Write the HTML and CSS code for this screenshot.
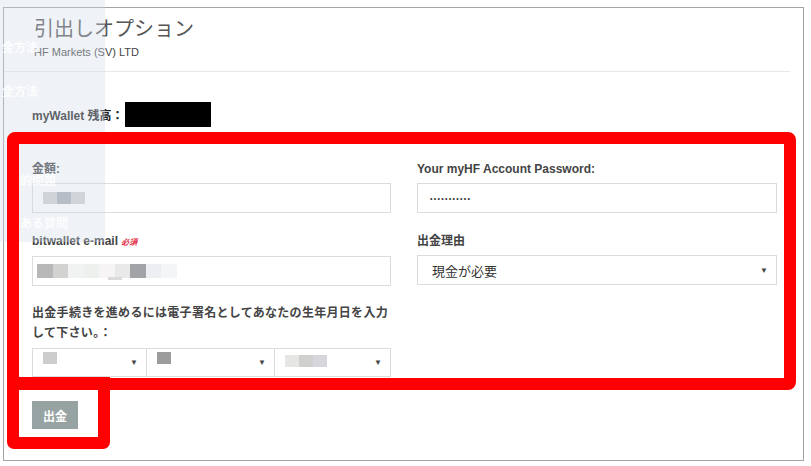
FILE: index.html
```html
<!DOCTYPE html>
<html lang="ja">
<head>
    <meta charset="UTF-8">
    <title>引出しオプション</title>
    <link rel="stylesheet" href="styles.css">
</head>
<body>
    <div class="page">
        <div class="modal">
            <div class="modal-header">
                <h2>引出しオプション</h2>
                <p>HF Markets (SV) LTD</p>
            </div>
            <div class="modal-body">
                <div class="balance">
                    <span>myWallet 残高：</span>
                    <span class="masked"></span>
                </div>

                <form class="withdraw-form">
                    <div class="form-group">
                        <label>金額:</label>
                        <div class="field">
                            <span class="blur" style="background:#d0d0d0"></span><span class="blur" style="background:#aaacb4"></span><span class="blur" style="background:#d0d1d1"></span>
                        </div>
                    </div>

                    <div class="form-group">
                        <label>Your myHF Account Password:</label>
                        <div class="field"><span class="dots">•••••••••••</span></div>
                    </div>

                    <div class="form-group">
                        <label>bitwallet e-mail <span class="required">必須</span></label>
                        <div class="field field-email">
                            <span class="blur" style="background:#b8b8b8"></span><span class="blur" style="background:#d2d2d0"></span><span class="blur" style="background:#f1f2f2"></span><span class="blur" style="background:#eef0ee"></span><span class="blur" style="background:#f6f4f4"></span><span class="blur" style="background:#e9e9e9"></span><span class="blur" style="background:#a2a3a6"></span><span class="blur" style="background:#eceef1"></span><span class="blur" style="background:#f4f5f6"></span>
                            <span class="blur-strip"></span>
                        </div>
                    </div>

                    <div class="form-group">
                        <label>出金理由</label>
                        <div class="field select">
                            <span>現金が必要</span>
                            <span class="arrow">▼</span>
                        </div>
                    </div>

                    <div class="form-group birth">
                        <label>出金手続きを進めるには電子署名としてあなたの生年月日を入力して下さい。：</label>
                        <div class="date-selects">
                            <div class="field select small"><span class="blur" style="background:#cdcdcd"></span><span class="arrow">▼</span></div>
                            <div class="field select small"><span class="blur" style="background:#9c9c9c"></span><span class="arrow">▼</span></div>
                            <div class="field select small"><span><span class="blur" style="background:#e6e6e4"></span><span class="blur" style="background:#d0d0ce"></span><span class="blur" style="background:#d6d6dc"></span></span><span class="arrow">▼</span></div>
                        </div>
                    </div>
                </form>

                <button class="btn-withdraw" type="button">出金</button>
            </div>
        </div>

        <div class="sidebar-ghost">
            <span class="g2">金方法</span>
            <span class="g3">金方法</span>
            <span class="g5">的問題</span>
            <span class="g6">ある質問</span>
        </div>

        <div class="mark mark-form"></div>
        <div class="mark mark-button"></div>
    </div>
</body>
</html>
```

FILE: styles.css
```css
* {
    margin: 0;
    padding: 0;
    box-sizing: border-box;
}

body {
    background-color: white;
    font-family: "Liberation Sans", "Noto Sans CJK JP", sans-serif;
    color: #333;
}

.page {
    position: relative;
    width: 811px;
    height: 466px;
    overflow: hidden;
    padding: 7px 0 0 3px;
}

.modal {
    width: 801px;
    height: 454px;
    border: 1px solid #a4a4a4;
    background-color: white;
}

.modal-header {
    padding: 9px 0 12px 30px;
    margin-right: 13px;
    border-bottom: 1px solid #e8e8e8;
}

.modal-header h2 {
    font-size: 20px;
    line-height: 24px;
    font-weight: normal;
    color: #555;
}

.modal-header p {
    font-size: 11px;
    line-height: 14px;
    margin-top: 4px;
    color: #444;
}

.modal-body {
    padding: 30px 0 0 28px;
}

.balance {
    display: flex;
    align-items: center;
    font-size: 12px;
    font-weight: bold;
    color: #222;
}

.masked {
    width: 86px;
    height: 25px;
    margin-left: 1px;
    background-color: black;
}

.withdraw-form {
    display: grid;
    grid-template-columns: 359px 360px;
    column-gap: 26px;
    row-gap: 20px;
    margin-top: 34px;
}

label {
    display: block;
    font-size: 12px;
    line-height: 17px;
    font-weight: bold;
    color: #444;
    margin-bottom: 5px;
}

.required {
    color: #e3233c;
    font-size: 8px;
    font-style: italic;
}

.field {
    height: 30px;
    border: 1px solid #dcdcdc;
    background-color: white;
    display: flex;
    align-items: center;
    padding-left: 10px;
    font-size: 13px;
    color: #333;
    position: relative;
}

.blur {
    display: inline-block;
    width: 14px;
    height: 12px;
    vertical-align: middle;
}

.field-email {
    padding-left: 4px;
}

.field-email .blur {
    width: 15.5px;
    height: 14px;
}

.blur-strip {
    position: absolute;
    left: 75px;
    top: 20px;
    width: 14px;
    height: 3px;
    background-color: #dadada;
}

.dots {
    font-size: 7px;
    letter-spacing: 1.3px;
    color: #333;
    padding-left: 2px;
}

.select {
    justify-content: space-between;
    padding: 0 8px 0 14px;
}

.arrow {
    font-size: 8px;
    color: #444;
}

.birth {
    margin-top: -3px;
}

.birth label {
    line-height: 20px;
    letter-spacing: 0.3px;
}

.date-selects {
    display: grid;
    grid-template-columns: 115px 128px 116px;
}

.field.small {
    height: 29px;
    padding: 3px 8px 0 10px;
    align-items: flex-start;
}

.field.small .arrow {
    align-self: center;
    margin-top: -3px;
}

.field.small + .field.small {
    border-left: none;
}

.btn-withdraw {
    margin-top: 24px;
    width: 46px;
    height: 28px;
    border: none;
    background-color: #97a3a3;
    color: white;
    font-family: "Liberation Sans", "Noto Sans CJK JP", sans-serif;
    font-size: 12px;
    font-weight: bold;
}

/* ghost of the page behind the dialog */
.sidebar-ghost {
    position: absolute;
    left: 0;
    top: 0;
    width: 105px;
    height: 242px;
    background-color: rgba(210, 220, 236, 0.35);
    color: rgba(255, 255, 255, 0.85);
    font-size: 12px;
    font-weight: bold;
}

.sidebar-ghost span {
    position: absolute;
    white-space: nowrap;
}

.g2 { left: 2px; top: 38px; }
.g3 { left: 2px; top: 82px; }
.g5 { left: 20px; top: 171px; }
.g6 { left: 20px; top: 214px; }

/* red annotation boxes */
.mark {
    position: absolute;
    border: 12px solid #ff0000;
}

.mark-form {
    left: 7px;
    top: 132px;
    width: 789px;
    height: 258px;
    border-radius: 8px;
}

.mark-button {
    left: 7px;
    top: 377px;
    width: 103px;
    height: 72px;
    border-radius: 0 0 7px 7px;
}
```
